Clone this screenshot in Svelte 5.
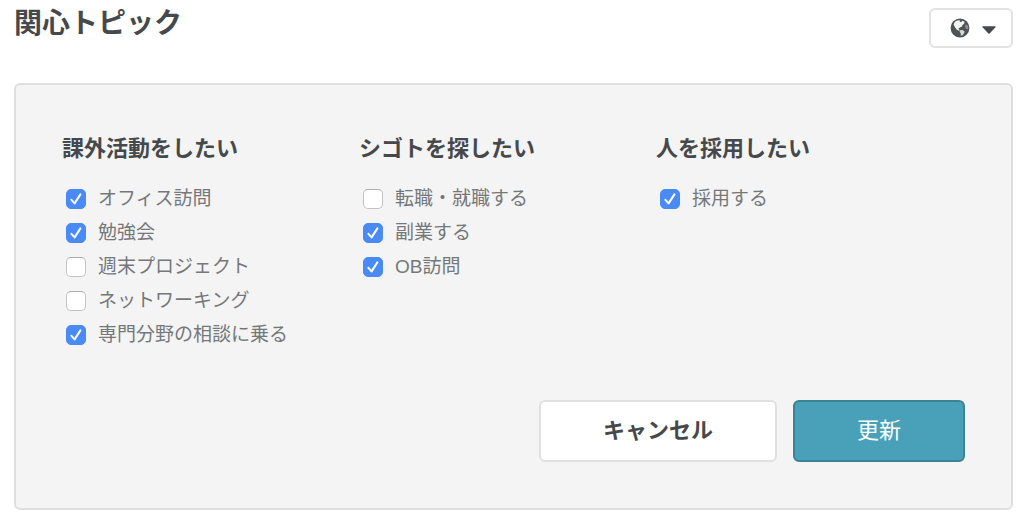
<script>
  let groups = $state([
    {
      id: 'activity',
      title: '課外活動をしたい',
      topics: [
        { label: 'オフィス訪問', checked: true },
        { label: '勉強会', checked: true },
        { label: '週末プロジェクト', checked: false },
        { label: 'ネットワーキング', checked: false },
        { label: '専門分野の相談に乗る', checked: true }
      ]
    },
    {
      id: 'job',
      title: 'シゴトを探したい',
      topics: [
        { label: '転職・就職する', checked: false },
        { label: '副業する', checked: true },
        { label: 'OB訪問', checked: true }
      ]
    },
    {
      id: 'hire',
      title: '人を採用したい',
      topics: [{ label: '採用する', checked: true }]
    }
  ]);

  const initial = $state.snapshot(groups);

  function cancel() {
    groups = structuredClone(initial);
  }
</script>

<main>
  <header>
    <h1>関心トピック</h1>
    <button type="button" class="privacy" aria-label="公開範囲" aria-haspopup="true">
      <svg class="globe" viewBox="0 0 20 20" width="20" height="20" aria-hidden="true">
        <circle cx="10" cy="10" r="9.4" fill="#505356" />
        <path d="M3.6 6.2 5.2 3.6 7.4 2.4 10 2.2 9.6 3.6 11 4.2 12.4 2.8 14.6 3.8 14.2 5.6 12.6 7 11.6 8.8 9.8 9.4 8.4 10.8 9.6 12 8.8 12.8 6.6 11.4 4.8 9z" fill="#f4f4f4" />
        <path d="M9.8 12.2 12.4 12 14.6 13.4 14 15.6 12.2 17.4 10.8 17.6 10.8 15.4 9.6 13.8z" fill="#d6d7d8" />
        <path d="M15.6 6.6 17.6 7.2 18.2 9.6 17.4 11.6 16 10.6 15 8.6z" fill="#8e9193" />
      </svg>
      <svg class="caret" viewBox="0 0 14 8" width="14" height="8" aria-hidden="true">
        <path d="M0.8 0.3h12.4a.5.5 0 0 1 .3.9L7.6 7.5a.8.8 0 0 1-1.2 0L.5 1.2a.5.5 0 0 1 .3-.9z" fill="#46494c" />
      </svg>
    </button>
  </header>

  <form onsubmit={(e) => e.preventDefault()}>
    <div class="groups">
      {#each groups as group (group.id)}
        <section aria-labelledby={group.id}>
          <h2 id={group.id}>{group.title}</h2>
          <ul>
            {#each group.topics as topic (topic.label)}
              <li>
                <label>
                  <span class="box">
                    <input type="checkbox" bind:checked={topic.checked} />
                    <svg viewBox="0 0 20 20" aria-hidden="true">
                      <path d="M5.4 10.8 8.6 14.4 14.4 5.4" />
                    </svg>
                  </span>
                  {topic.label}
                </label>
              </li>
            {/each}
          </ul>
        </section>
      {/each}
    </div>

    <div class="actions">
      <button type="button" class="btn cancel" onclick={cancel}>キャンセル</button>
      <button type="submit" class="btn update">更新</button>
    </div>
  </form>
</main>

<style>
  :global(body) {
    margin: 0;
    background: #fff;
    color: #46494c;
    font-family: "Liberation Sans", "Noto Sans CJK JP", sans-serif;
  }

  main {
    padding: 0 11px 10px 14px;
  }

  header {
    display: flex;
    justify-content: space-between;
    align-items: flex-start;
    padding-bottom: 35px;
  }

  h1 {
    margin: 0;
    font-size: 28px;
    line-height: 48px;
    font-weight: 700;
  }

  .privacy {
    display: flex;
    align-items: center;
    gap: 12px;
    height: 40px;
    margin-top: 8px;
    padding: 0 15px 0 19px;
    background: #fff;
    border: 2px solid #e2e2e2;
    border-radius: 6px;
    cursor: pointer;
  }

  .caret {
    margin-top: 4px;
  }

  form {
    padding: 47px 46px 46px;
    background: #f4f4f4;
    border: 2px solid #dfdfdf;
    border-radius: 6px;
  }

  .groups {
    display: grid;
    grid-template-columns: repeat(3, 1fr);
    padding-right: 12px;
  }

  h2 {
    margin: 0 0 16px;
    font-size: 22px;
    line-height: 34px;
    font-weight: 700;
  }

  ul {
    margin: 0;
    padding: 0;
    list-style: none;
  }

  label {
    display: flex;
    align-items: center;
    gap: 12px;
    padding-left: 4px;
    font-size: 19px;
    line-height: 34px;
    color: #75787b;
    cursor: pointer;
  }

  .box {
    display: grid;
    width: 20px;
    height: 20px;
  }

  .box input,
  .box svg {
    grid-area: 1 / 1;
    width: 20px;
    height: 20px;
    box-sizing: border-box;
    margin: 0;
  }

  .box input {
    appearance: none;
    background: #fff;
    border: 1px solid #c2c2c2;
    border-top-color: #adadad;
    border-radius: 5px;
  }

  .box input:checked {
    background: #4a8af4;
    border-color: #4a8af4;
  }

  .box svg {
    visibility: hidden;
    pointer-events: none;
  }

  .box input:checked + svg {
    visibility: visible;
  }

  .box path {
    fill: none;
    stroke: #fff;
    stroke-width: 2;
    stroke-linecap: round;
    stroke-linejoin: round;
  }

  .actions {
    display: flex;
    justify-content: flex-end;
    gap: 16px;
    margin-top: 48px;
  }

  .btn {
    padding: 12px 62px;
    border: 2px solid #e0e0e0;
    border-radius: 6px;
    font: inherit;
    font-size: 22px;
    line-height: 34px;
    cursor: pointer;
  }

  .cancel {
    background: #fff;
    color: #46494c;
    font-weight: 700;
  }

  .update {
    background: #48a1b8;
    border-color: #3b8395;
    color: #fff;
  }

  .privacy:focus-visible,
  .btn:focus-visible,
  .box input:focus-visible {
    outline: 2px solid #4a8af4;
    outline-offset: 2px;
  }
</style>
